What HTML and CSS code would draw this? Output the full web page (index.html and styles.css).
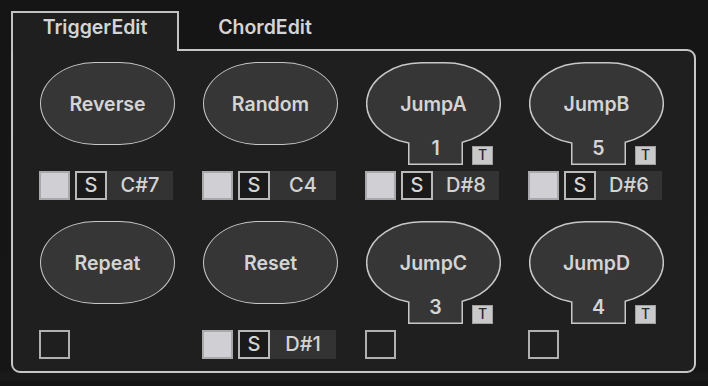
FILE: index.html
```html
<!DOCTYPE html>
<html>
<head>
<meta charset="utf-8">
<link rel="stylesheet" href="styles.css">
</head>
<body>
<div class="tabs">
  <div class="tab active">TriggerEdit</div>
  <div class="tab">ChordEdit</div>
</div>
<div class="panel">
  <div class="grid">
    <div class="cell">
      <div class="area"><div class="pill">Reverse</div></div>
      <div class="ctrls"><span class="chk on"></span><span class="sbox">S</span><span class="note">C#7</span></div>
    </div>
    <div class="cell">
      <div class="area"><div class="pill">Random</div></div>
      <div class="ctrls"><span class="chk on"></span><span class="sbox">S</span><span class="note">C4</span></div>
    </div>
    <div class="cell">
      <div class="area jump">
        <svg class="jshape" width="135" height="104" viewBox="0 0 135 104"><path d="M55.75 0.75 H79.25 A55 40.75 0 0 1 96.25 80.26 V102.25 H42.75 V81.1 A55 40.75 0 0 1 55.75 0.75 Z"/></svg>
        <div class="jlabel">JumpA</div>
        <div class="jnum">1</div>
        <span class="tbadge">T</span>
      </div>
      <div class="ctrls"><span class="chk on"></span><span class="sbox">S</span><span class="note">D#8</span></div>
    </div>
    <div class="cell">
      <div class="area jump">
        <svg class="jshape" width="135" height="104" viewBox="0 0 135 104"><path d="M55.75 0.75 H79.25 A55 40.75 0 0 1 96.25 80.26 V102.25 H42.75 V81.1 A55 40.75 0 0 1 55.75 0.75 Z"/></svg>
        <div class="jlabel">JumpB</div>
        <div class="jnum">5</div>
        <span class="tbadge">T</span>
      </div>
      <div class="ctrls"><span class="chk on"></span><span class="sbox">S</span><span class="note">D#6</span></div>
    </div>

    <div class="cell">
      <div class="area"><div class="pill">Repeat</div></div>
      <div class="ctrls"><span class="chk"></span></div>
    </div>
    <div class="cell">
      <div class="area"><div class="pill">Reset</div></div>
      <div class="ctrls"><span class="chk on"></span><span class="sbox">S</span><span class="note">D#1</span></div>
    </div>
    <div class="cell">
      <div class="area jump">
        <svg class="jshape" width="135" height="104" viewBox="0 0 135 104"><path d="M55.75 0.75 H79.25 A55 40.75 0 0 1 96.25 80.26 V102.25 H42.75 V81.1 A55 40.75 0 0 1 55.75 0.75 Z"/></svg>
        <div class="jlabel">JumpC</div>
        <div class="jnum">3</div>
        <span class="tbadge">T</span>
      </div>
      <div class="ctrls"><span class="chk"></span></div>
    </div>
    <div class="cell">
      <div class="area jump">
        <svg class="jshape" width="135" height="104" viewBox="0 0 135 104"><path d="M55.75 0.75 H79.25 A55 40.75 0 0 1 96.25 80.26 V102.25 H42.75 V81.1 A55 40.75 0 0 1 55.75 0.75 Z"/></svg>
        <div class="jlabel">JumpD</div>
        <div class="jnum">4</div>
        <span class="tbadge">T</span>
      </div>
      <div class="ctrls"><span class="chk"></span></div>
    </div>
  </div>
</div>
</body>
</html>
```

FILE: styles.css
```css
* { box-sizing: border-box; }
html, body { margin: 0; padding: 0; }
body {
  width: 708px;
  height: 386px;
  background: linear-gradient(#151515 0, #161616 370px, #1a1a1a 374px, #1a1a1a 380px, #131313 381px);
  font-family: "Inter", "DejaVu Sans", sans-serif;
  font-weight: 600;
  color: #d4d4d4;
  overflow: hidden;
}
.tabs {
  display: flex;
  gap: 2px;
  padding: 11px 0 0 11px;
}
.tab {
  width: 168px;
  height: 38px;
  text-align: center;
  font-size: 19.5px;
  line-height: 29px;
  padding-top: 2px;
  position: relative;
  z-index: 1;
}
.tab.active {
  background: #1f1f1f;
  border: 2px solid #c2c2c2;
  border-bottom: none;
  height: 40px;
  margin-bottom: -2px;
  padding-top: 0;
}
.panel {
  margin-left: 11px;
  width: 685px;
  height: 324px;
  background: #1f1f1f;
  border: 2px solid #c6c6c6;
  border-radius: 0 9px 9px 9px;
  padding: 11px 0 0 27px;
}
.grid {
  display: grid;
  grid-template-columns: repeat(4, 135px);
  column-gap: 28px;
  row-gap: 21px;
}
.cell {
  display: flex;
  flex-direction: column;
}
.area {
  height: 104px;
}
.pill {
  width: 135px;
  height: 83px;
  background: #363636;
  border: 1.5px solid #c8c8c8;
  border-radius: 55px / 41.5px;
  display: flex;
  align-items: center;
  justify-content: center;
  font-size: 19.5px;
}
.jump {
  display: grid;
  position: relative;
  width: 135px;
}
.jump > * { grid-area: 1 / 1; }
.jshape path {
  fill: #363636;
  stroke: #c8c8c8;
  stroke-width: 1.5;
}
.jlabel {
  height: 83px;
  display: flex;
  align-items: center;
  justify-content: center;
  font-size: 19.5px;
}
.jnum {
  margin-top: 74px;
  height: 25px;
  line-height: 25px;
  text-align: center;
  padding-left: 4px;
  font-size: 19.5px;
}
.tbadge {
  position: absolute;
  left: 106px;
  top: 84px;
  width: 21px;
  height: 19px;
  background: #c9c9c9;
  border: 1.5px solid #a0a0a0;
  color: #2a2a2a;
  font-size: 14px;
  font-weight: 500;
  line-height: 16px;
  text-align: center;
}
.ctrls {
  display: flex;
  height: 29px;
  margin-top: 5px;
}
.chk {
  width: 31px;
  height: 29px;
  border: 2px solid #b0b0b0;
  margin-left: -1px;
}
.chk.on {
  background: #d0d0d4;
  border-color: #a9a9ab;
}
.sbox {
  width: 32px;
  height: 29px;
  margin-left: 5px;
  border: 2px solid #b9b9b9;
  background: #1a1a1a;
  font-size: 20px;
  font-weight: 500;
  line-height: 25px;
  text-align: center;
}
.note {
  width: 66px;
  height: 29px;
  background: #333333;
  font-size: 20px;
  font-weight: 500;
  line-height: 29px;
  text-align: center;
}
```
